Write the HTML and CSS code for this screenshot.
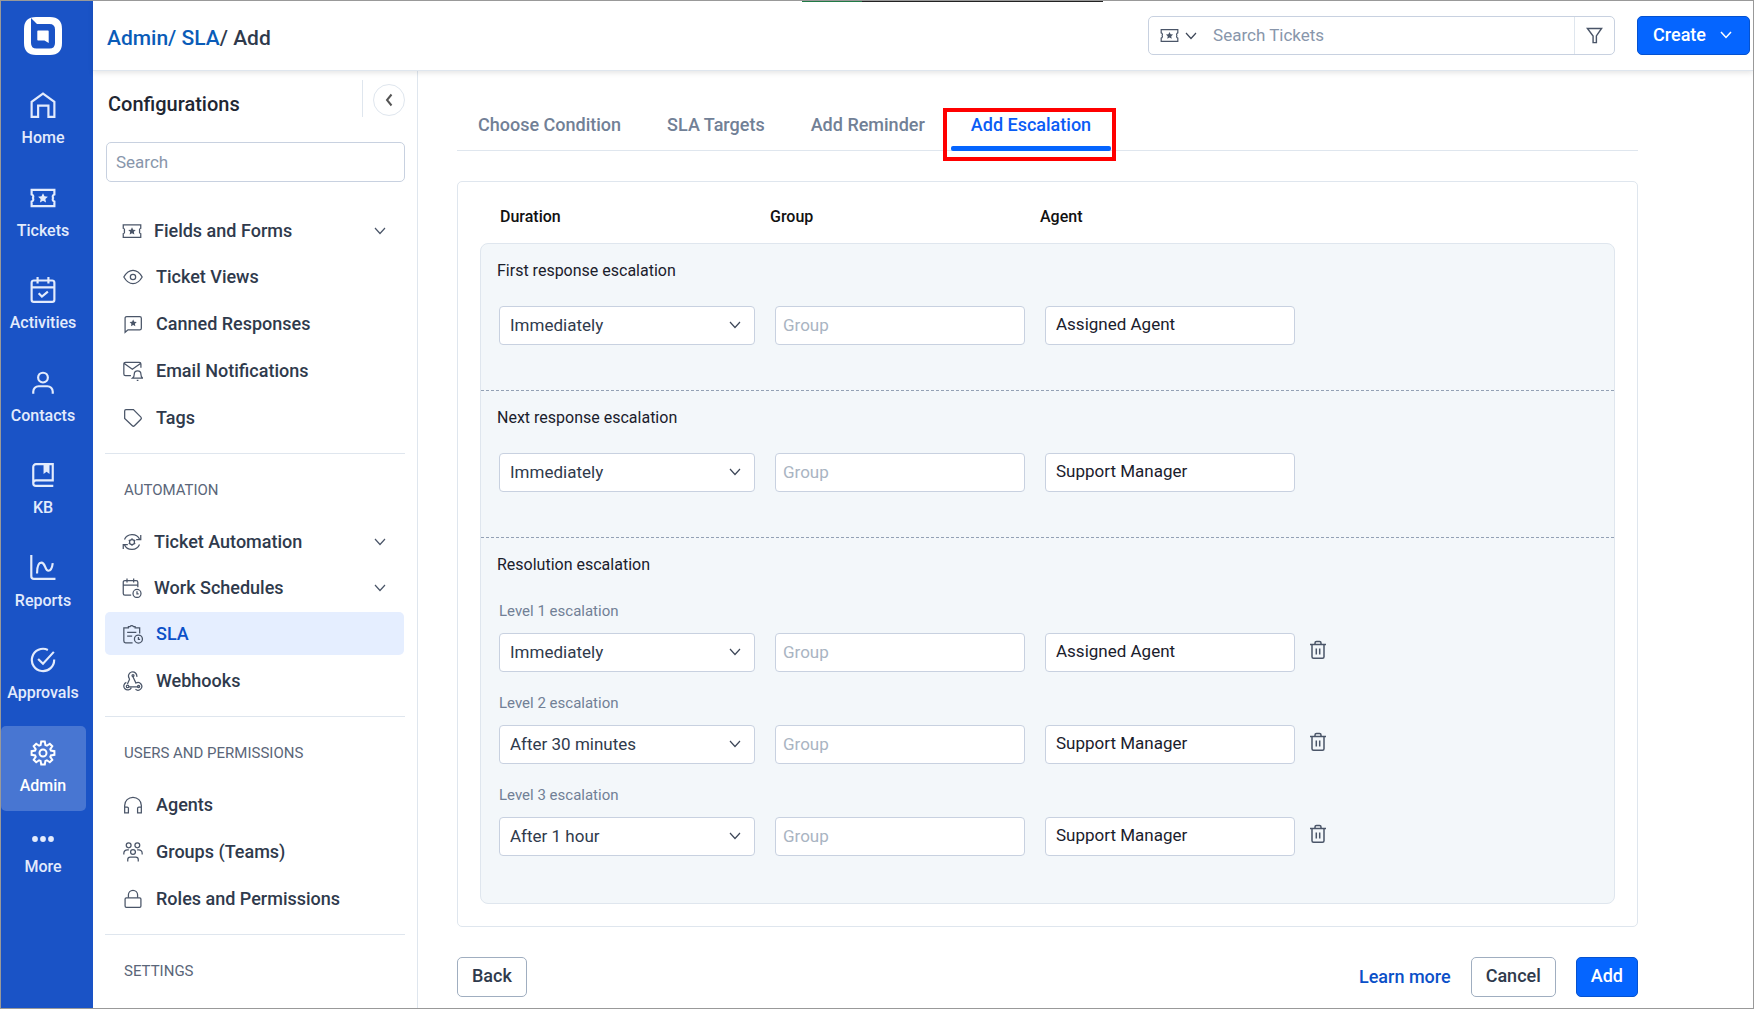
FILE: index.html
```html
<!DOCTYPE html>
<html lang="en">
<head>
<meta charset="utf-8">
<title>Admin / SLA / Add</title>
<meta name="viewport" content="width=device-width, initial-scale=1">
<link rel="stylesheet" href="styles.css">
</head>
<body>
<svg class="defs" aria-hidden="true">
  <symbol id="i-ticket" viewBox="0 0 24 24"><path d="M1.5 4.500h21v4.200a2.200 2.200 0 0 0-1.200 3.300 2.200 2.200 0 0 0 1.200 3.300v4.200h-21v-4.200a2.200 2.200 0 0 0 1.200-3.300 2.200 2.200 0 0 0-1.200-3.300z"/><path d="m12 7.500 1.400 2.900 3.100.4-2.300 2.200.6 3.100-2.800-1.500-2.800 1.500.6-3.100-2.300-2.200 3.100-.4z" fill="currentColor" stroke="none"/></symbol>
  <symbol id="i-chevron" viewBox="0 0 12 12"><path d="m1 3 5 5.500L11 3"/></symbol>
  <symbol id="i-trash" viewBox="0 0 18 20"><path d="M1 4.500h16M6 4.500V3a1.500 1.500 0 0 1 1.500-1.500h3A1.500 1.500 0 0 1 12 3v1.500M3 4.500v12.300a1.500 1.500 0 0 0 1.500 1.500h9a1.500 1.500 0 0 0 1.500-1.500V4.500M7.300 8.500v6M10.700 8.500v6"/></symbol>
</svg>
<div class="app">
  <nav class="rail" aria-label="Main">
    <a class="logo" href="#" aria-label="Start page"><svg viewBox="0 0 40 40"><path fill="#fff" fill-rule="evenodd" d="M13 1h14q12 0 12 12v14q0 12-12 12H13Q1 39 1 27V13Q1 1 13 1zM8 2v25q0 5.500 5.500 5.500h13q5.500 0 5.500-5.500V13.500Q32 8 26.500 8H14z"/><path fill="#fff" d="M15 14.500h10q.7 0 .7.700V27l-4.200-2.500H15q-.7 0-.7-.7v-8.600q0-.7.700-.7z"/></svg></a>
    <ul class="rail-list">
      <li><a href="#"><svg viewBox="0 0 24 24"><path d="M1.500 23V9L12 1.500 22.500 9v14h-5.500V12.500H7.500V23z"/></svg>Home</a></li>
      <li><a href="#"><svg><use href="#i-ticket"/></svg>Tickets</a></li>
      <li><a href="#"><svg viewBox="0 0 24 24"><path d="M3.500 3.200h17a2 2 0 0 1 2 2V21a2 2 0 0 1-2 2h-17a2 2 0 0 1-2-2V5.200a2 2 0 0 1 2-2zM1.500 9.500h21M7 0v6M17 0v6M8 15l3 3 5.500-4.500"/></svg>Activities</a></li>
      <li><a href="#"><svg viewBox="0 0 24 24"><circle cx="12" cy="7" r="4.500"/><path d="M3 22v-2a5 5 0 0 1 5-5h8a5 5 0 0 1 5 5v2"/></svg>Contacts</a></li>
      <li><a href="#"><svg viewBox="0 0 24 24"><path d="M21.500 22H5.500a2.500 2.500 0 0 1-2.500-2.500V4.500A2.500 2.500 0 0 1 5.500 2h15.500v15H5.500A2.500 2.500 0 0 0 3 19.500"/><path fill="currentColor" stroke="none" d="M12.500 2h5.500v9l-2.700-2-2.800 2z"/></svg>KB</a></li>
      <li><a href="#"><svg viewBox="0 0 24 24"><path d="M1.200 0v19.500A2.500 2.500 0 0 0 3.700 22H23.500M6.500 17c0-6 1-10 4-10 4 0 3 7.500 6.500 7.500 2.500 0 3.500-3 4-7"/></svg>Reports</a></li>
      <li><a href="#"><svg viewBox="0 0 24 24"><path d="M16.500 2.700A10.300 10.300 0 1 0 22.300 11.500M7.500 11l4.500 4.500L22 4.500"/></svg>Approvals</a></li>
      <li><a class="active" href="#" aria-current="page"><svg viewBox="0 0 26 26"><path d="m10.600 5.100.6-3.500h3.600l.6 3.500 1.500.6 2.900-2 2.500 2.500-2 2.900.6 1.500 3.500.6v3.600l-3.500.6-.6 1.500 2 2.900-2.500 2.500-2.900-2-1.500.6-.6 3.500h-3.600l-.6-3.500-1.500-.6-2.900 2-2.500-2.500 2-2.900-.6-1.500-3.500-.6v-3.600l3.500-.6.6-1.500-2-2.900 2.500-2.500 2.900 2z"/><circle cx="13" cy="13" r="3.500"/></svg>Admin</a></li>
    </ul>
    <a class="more" href="#"><svg viewBox="0 0 24 8"><g fill="currentColor" stroke="none"><circle cx="4" cy="4" r="2.900"/><circle cx="12" cy="4" r="2.900"/><circle cx="20" cy="4" r="2.900"/></g></svg>More</a>
  </nav>

  <div class="page">
    <header class="topbar">
      <h1 class="crumbs"><a href="#">Admin/</a> <a href="#">SLA</a>/ Add</h1>
      <form class="ticket-search">
        <button class="scope" type="button" aria-label="Search scope"><svg class="scope-icon"><use href="#i-ticket"/></svg><svg class="chev"><use href="#i-chevron"/></svg></button>
        <input type="search" placeholder="Search Tickets" aria-label="Search Tickets">
        <button class="filter" type="button" aria-label="Filter"><svg viewBox="0 0 18 18"><path d="M1.500 1.500h15l-5.500 8v7h-3.500v-7z"/></svg></button>
      </form>
      <button class="btn primary create" type="button">Create<svg class="chev"><use href="#i-chevron"/></svg></button>
    </header>

    <div class="body">
      <aside class="config">
        <div class="config-head"><h2>Configurations</h2><button class="collapse" type="button" aria-label="Collapse"><svg viewBox="0 0 10 14"><path d="M7.500 1.500 3 7l4.500 5.500"/></svg></button></div>
        <input class="config-search" type="search" placeholder="Search" aria-label="Search configurations">
        <ul class="menu">
          <li><a class="parent" href="#"><svg><use href="#i-ticket"/></svg>Fields and Forms<svg class="chev"><use href="#i-chevron"/></svg></a></li>
          <li><a href="#"><svg viewBox="0 0 24 24"><path d="M1 12q4.500-8 11-8t11 8q-4.500 8-11 8T1 12z"/><circle cx="12" cy="12" r="3.200"/></svg>Ticket Views</a></li>
          <li><a href="#"><svg viewBox="0 0 24 24"><path d="M2.500 22V5a2 2 0 0 1 2-2h15.500a2 2 0 0 1 2 2v12a2 2 0 0 1-2 2H6z"/><path fill="currentColor" stroke="none" d="m12.200 6.500 1.300 2.700 3 .4-2.200 2.100.5 3-2.600-1.400-2.600 1.400.5-3-2.200-2.100 3-.4z"/></svg>Canned Responses</a></li>
          <li><a href="#"><svg viewBox="0 0 24 24"><path d="M9.500 17.500H3a2 2 0 0 1-2-2V3.500a2 2 0 0 1 2-2h16.500a2 2 0 0 1 2 2V8M1.500 3l9.700 7L21 3M11.500 20.500c2-1.500 2-2 2-4.500 0-5.500 8-5.500 8 0 0 2.500 0 3 2 4.500zM16.500 23.200h2"/></svg>Email Notifications</a></li>
          <li><a href="#"><svg viewBox="0 0 24 24"><path d="M2 3.500A1.500 1.500 0 0 1 3.500 2h9l9 9a1.800 1.800 0 0 1 0 2.500l-7.800 7.800a1.800 1.800 0 0 1-2.500 0L2 12.500z"/></svg>Tags</a></li>
        </ul>
        <h3>AUTOMATION</h3>
        <ul class="menu">
          <li><a class="parent" href="#"><svg viewBox="0 0 24 24"><path d="M3 9C6 1.500 17.500 1 21 8.500M21 15C18 22.500 6.500 23 3 15.500M22.500 3.500v5.500h-5.500M1.500 20.500V15H7"/><circle cx="12" cy="12" r="3"/><path d="M12 7.500V9M12 15v1.500M8.100 9.800l1.300.7M14.600 13.500l1.300.7M8.100 14.200l1.300-.7M14.600 10.500l1.300-.7"/></svg>Ticket Automation<svg class="chev"><use href="#i-chevron"/></svg></a></li>
          <li><a class="parent" href="#"><svg viewBox="0 0 24 24"><path d="M11 20.500H3.500a2 2 0 0 1-2-2V5a2 2 0 0 1 2-2H17a2 2 0 0 1 2 2v6M1.500 8.500H19M6 .5v5M14 .5v5"/><circle cx="18" cy="18.500" r="4.800"/><path d="M18 16v3h2"/></svg>Work Schedules<svg class="chev"><use href="#i-chevron"/></svg></a></li>
          <li><a class="active" href="#" aria-current="page"><svg viewBox="0 0 24 24"><path d="M11.500 22.500H3a2 2 0 0 1-2-2V4.500H6.500V3h2a2.300 2.300 0 0 1 4 0h2v1.500H20V11.500M5 10h11M5 14.500h6"/><circle cx="18.500" cy="18" r="4.800"/><path d="M18.500 15.500v3h2"/></svg>SLA</a></li>
          <li><a href="#"><svg viewBox="0 0 24 24"><path d="M8 9.500a5 5 0 1 1 8.500-2.500M8 9.500 5.300 15.500M11.500 6l4 8.500a4.600 4.600 0 1 1-.5 7.500M7 19h11.500M4 13.700a4.700 4.700 0 1 0 6 6.300"/><circle cx="12" cy="5.500" r="1.200"/><circle cx="5.500" cy="18.500" r="1.500"/><circle cx="18.700" cy="18.500" r="1.300"/></svg>Webhooks</a></li>
        </ul>
        <h3>USERS AND PERMISSIONS</h3>
        <ul class="menu">
          <li><a href="#"><svg viewBox="0 0 24 24"><path d="M2 21v-8.500a10 9.800 0 0 1 20 0V21M2 14.500h3a1.500 1.500 0 0 1 1.500 1.500v5.500H2zM22 14.500h-3a1.500 1.500 0 0 0-1.500 1.500v5.500H22z"/></svg>Agents</a></li>
          <li><a href="#"><svg viewBox="0 0 24 24"><circle cx="6.800" cy="4" r="2.900"/><circle cx="17.200" cy="4" r="2.900"/><circle cx="12" cy="12" r="2.900"/><path d="M1 15v-1.500A4.200 4.200 0 0 1 5.200 9.300H7M23 15v-1.500a4.200 4.200 0 0 0-4.200-4.200H17M5.700 23.500V21a3 3 0 0 1 3-3h6.600a3 3 0 0 1 3 3v2.500"/></svg>Groups (Teams)</a></li>
          <li><a href="#"><svg viewBox="0 0 24 24"><rect x="2.500" y="10.500" width="19" height="11.500" rx="1.500"/><path d="M6.500 10.500V7a5.500 5.500 0 0 1 11 0v3.500"/></svg>Roles and Permissions</a></li>
        </ul>
        <h3>SETTINGS</h3>
      </aside>

      <main class="content">
        <nav class="tabs" aria-label="SLA steps">
          <a href="#">Choose Condition</a>
          <a href="#">SLA Targets</a>
          <a href="#">Add Reminder</a>
          <a class="active" href="#" aria-current="step">Add Escalation<span class="callout"></span></a>
        </nav>

        <section class="card">
          <div class="cols heads"><span>Duration</span><span>Group</span><span>Agent</span></div>
          <div class="panel">
            <section class="block">
              <h4>First response escalation</h4>
              <div class="fields">
                <div class="pick"><select aria-label="First response duration"><option>Immediately</option></select><svg class="chev"><use href="#i-chevron"/></svg></div>
                <input type="text" placeholder="Group" aria-label="First response group">
                <input type="text" class="agent" value="Assigned Agent" aria-label="First response agent">
              </div>
            </section>
            <section class="block">
              <h4>Next response escalation</h4>
              <div class="fields">
                <div class="pick"><select aria-label="Next response duration"><option>Immediately</option></select><svg class="chev"><use href="#i-chevron"/></svg></div>
                <input type="text" placeholder="Group" aria-label="Next response group">
                <input type="text" class="agent" value="Support Manager" aria-label="Next response agent">
              </div>
            </section>
            <section class="block levels">
              <h4>Resolution escalation</h4>
              <label for="l1">Level 1 escalation</label>
              <div class="fields">
                <div class="pick"><select id="l1"><option>Immediately</option></select><svg class="chev"><use href="#i-chevron"/></svg></div>
                <input type="text" placeholder="Group" aria-label="Level 1 group">
                <input type="text" class="agent" value="Assigned Agent" aria-label="Level 1 agent">
                <button class="trash" type="button" aria-label="Delete level 1"><svg><use href="#i-trash"/></svg></button>
              </div>
              <label for="l2">Level 2 escalation</label>
              <div class="fields">
                <div class="pick"><select id="l2"><option>After 30 minutes</option></select><svg class="chev"><use href="#i-chevron"/></svg></div>
                <input type="text" placeholder="Group" aria-label="Level 2 group">
                <input type="text" class="agent" value="Support Manager" aria-label="Level 2 agent">
                <button class="trash" type="button" aria-label="Delete level 2"><svg><use href="#i-trash"/></svg></button>
              </div>
              <label for="l3">Level 3 escalation</label>
              <div class="fields">
                <div class="pick"><select id="l3"><option>After 1 hour</option></select><svg class="chev"><use href="#i-chevron"/></svg></div>
                <input type="text" placeholder="Group" aria-label="Level 3 group">
                <input type="text" class="agent" value="Support Manager" aria-label="Level 3 agent">
                <button class="trash" type="button" aria-label="Delete level 3"><svg><use href="#i-trash"/></svg></button>
              </div>
            </section>
          </div>
        </section>

        <footer class="actions">
          <button class="btn" type="button">Back</button>
          <a class="learn" href="#">Learn more</a>
          <button class="btn" type="button">Cancel</button>
          <button class="btn primary" type="submit">Add</button>
        </footer>
      </main>
    </div>
  </div>
</div>
</body>
</html>
```
FILE: styles.css
```css
* { box-sizing: border-box; }
body { margin: 0; font: 16px/24px Roboto, "Liberation Sans", sans-serif; color: #2f3a4c; background: #fff; }
a { color: inherit; text-decoration: none; }
ul { list-style: none; margin: 0; padding: 0; }
h1, h2, h3, h4 { margin: 0; }
input, select, button { font: inherit; color: inherit; }
input::-webkit-search-cancel-button { display: none; }
svg { fill: none; stroke: currentColor; stroke-width: 1.5; flex: none; display: block; }
.defs { position: absolute; width: 0; height: 0; }
.chev { width: 12px; height: 12px; stroke-width: 1.2; color: #3d4758; }

.app { display: flex; height: 100vh; overflow: hidden; border: 1px solid #999; position: relative; }
.app::before { content: ""; position: absolute; top: 0; left: 801px; width: 301px; height: 1px; background: linear-gradient(90deg, #217a46 60px, #222 60px); z-index: 3; }

.rail { width: 92px; flex: none; background: #1a53c6; color: #e3ebfc; padding-right: 7px; font-size: 16px; line-height: 20px; font-weight: 500; }
.logo { display: block; padding: 15px 0 0 22px; height: 77px; }
.logo svg { width: 40px; height: 40px; stroke: none; }
.rail-list { display: flex; flex-direction: column; justify-content: space-between; min-height: 733px; }
.rail-list a { display: flex; flex-direction: column; align-items: center; height: 85px; padding: 14px 1px 0 0; gap: 10px; border-radius: 5px; }
.rail-list svg { width: 26px; height: 26px; stroke-width: 2; }
.rail .active { background: #4876d2; color: #fff; }
.more { display: flex; flex-direction: column; align-items: center; gap: 14px; padding: 24px 1px 0 0; }
.more svg { width: 24px; height: 8px; }

.page { flex: 1; min-width: 0; display: flex; flex-direction: column; }
.topbar { display: flex; align-items: flex-start; height: 70px; flex: none; padding: 15px 3px 0 14px; border-bottom: 1px solid #dfe6ee; box-shadow: 0 2px 5px #0000001a; position: relative; z-index: 1; }
.crumbs { flex: 1; font-size: 21px; line-height: 24px; font-weight: 500; padding-top: 10px; }
.crumbs a { color: #0a5cb8; }
.ticket-search { display: flex; width: 467px; height: 39px; border: 1px solid #c8d1e0; border-radius: 5px; margin-right: 22px; }
.ticket-search button { border: 0; background: none; display: flex; align-items: center; color: #4a5568; padding: 0 11px; }
.scope { gap: 6px; }
.ticket-search .scope-icon { width: 19px; height: 19px; }
.ticket-search input { flex: 1; min-width: 0; border: 0; padding: 0 5px 2px; background: none; font-size: 17px; }
.ticket-search .filter { border-left: 1px solid #dfe6ee; }
.filter svg { width: 17px; height: 17px; }
::placeholder { color: #8896ab; opacity: 1; }

.btn { height: 40px; padding: 0 14px 2px; border: 1px solid #a0aec0; border-radius: 5px; background: #fff; font-size: 18px; font-weight: 500; line-height: 24px; }
.btn.primary { background: #0565ff; border-color: #0552d0; color: #fff; }
.btn.create { display: flex; align-items: center; gap: 14px; height: 39px; padding: 0 17px 2px 15px; }
.create .chev { stroke-width: 1.5; color: #fff; }

.body { flex: 1; min-height: 0; display: flex; }
.config { width: 325px; flex: none; border-right: 1px solid #dfe6ee; padding: 10px 12px 0 12px; }
.config-head { display: flex; justify-content: space-between; height: 61px; }
.config h2 { font-size: 20px; line-height: 24px; font-weight: 500; color: #1f2733; padding: 11px 0 0 3px; }
.config-head button { width: 32px; height: 32px; border: 1px solid #dfe6ee; border-radius: 50%; background: #fff; display: grid; place-items: center; padding: 0; margin-top: 3px; color: #555; position: relative; }
.collapse::before { content: ""; position: absolute; left: -12px; top: -5px; height: 37px; border-left: 1px solid #dfe6ee; }
.collapse svg { width: 10px; height: 14px; stroke-width: 2; }
.config-search { display: block; width: 299px; height: 40px; margin: 0 1px 27px; border: 1px solid #c8d1e0; border-radius: 5px; padding: 0 9px; font-size: 17px; }
.menu a { display: flex; align-items: center; height: 43px; margin: 0 1px 4px 0; padding: 0 18px; gap: 13px; font-size: 18px; font-weight: 500; border-radius: 5px; }
.menu svg { width: 20px; height: 20px; color: #4a5568; }
.menu .parent { gap: 12px; padding-left: 17px; margin-bottom: 3px; }
.menu .chev { width: 12px; height: 12px; margin-left: auto; }
.menu .active { background: #e5eeff; color: #0b50c8; }
.config h3 { border-top: 1px solid #dfe6ee; margin: 14px 0 18px; padding: 24px 0 0 19px; font-size: 15px; line-height: 24px; font-weight: 400; color: #5a6679; }

.content { flex: 1; min-width: 0; padding: 31px 115px 0 39px; }
.tabs { display: flex; gap: 6px; border-bottom: 1px solid #dfe6ee; height: 49px; padding-left: 1px; font-size: 18px; font-weight: 500; color: #718096; }
.tabs a { padding: 11px 20px 0; height: 49px; position: relative; white-space: nowrap; }
.tabs .active { color: #0a5cf5; }
.tabs .active::after { content: ""; position: absolute; left: 0; right: 0; bottom: 0; height: 5px; border-radius: 2px; background: #0565ff; }
.callout { position: absolute; left: -8px; right: -5px; top: 6px; height: 53px; border: 4px solid #f00; }
.card { margin-top: 30px; padding: 23px 22px 22px; border: 1px solid #dfe6ee; border-radius: 5px; }
.cols, .fields { display: grid; grid-template-columns: 250px 250px 250px auto; column-gap: 20px; justify-content: start; }
.heads { padding: 0 20px 14px; font-size: 16px; font-weight: 500; color: #111; }
.panel { background: #f3f7fa; border: 1px solid #dfe6ee; border-radius: 8px; }
.block { padding: 15px 18px 0 18px; height: 147px; border-bottom: 1px dashed #93a1b5; }
.block h4 { font-size: 16px; line-height: 24px; font-weight: 400; color: #1a202c; margin: 0 0 23px -2px; }
.levels { height: auto; border: 0; padding-bottom: 47px; }
.levels h4 { margin-bottom: 22px; }
.levels label { display: block; font-size: 15px; line-height: 24px; color: #718096; margin-bottom: 10px; }
.fields + label { margin-top: 19px; }
.fields { grid-template-columns: 256px 250px 250px auto; }
.block input, .pick select { width: 100%; height: 39px; border: 1px solid #c8d1e0; border-radius: 4px; background: #fff; padding: 0 7px 2px; font-size: 17px; }
.pick select { appearance: none; padding: 0 10px 2px; }
.block .agent { padding: 0 10px 4px; color: #1a202c; }
.block ::placeholder { color: #a9b4c2; }
.pick { position: relative; }
.pick .chev { position: absolute; right: 14px; top: 13px; pointer-events: none; }
.trash { border: 0; background: none; padding: 0; height: 34px; display: flex; align-items: center; color: #4a5568; margin-left: -6px; }
.trash svg { width: 18px; height: 20px; }

.actions { display: flex; align-items: center; margin-top: 30px; gap: 20px; }
.learn { margin-left: auto; color: #0b50c8; font-size: 18px; font-weight: 500; }
```
